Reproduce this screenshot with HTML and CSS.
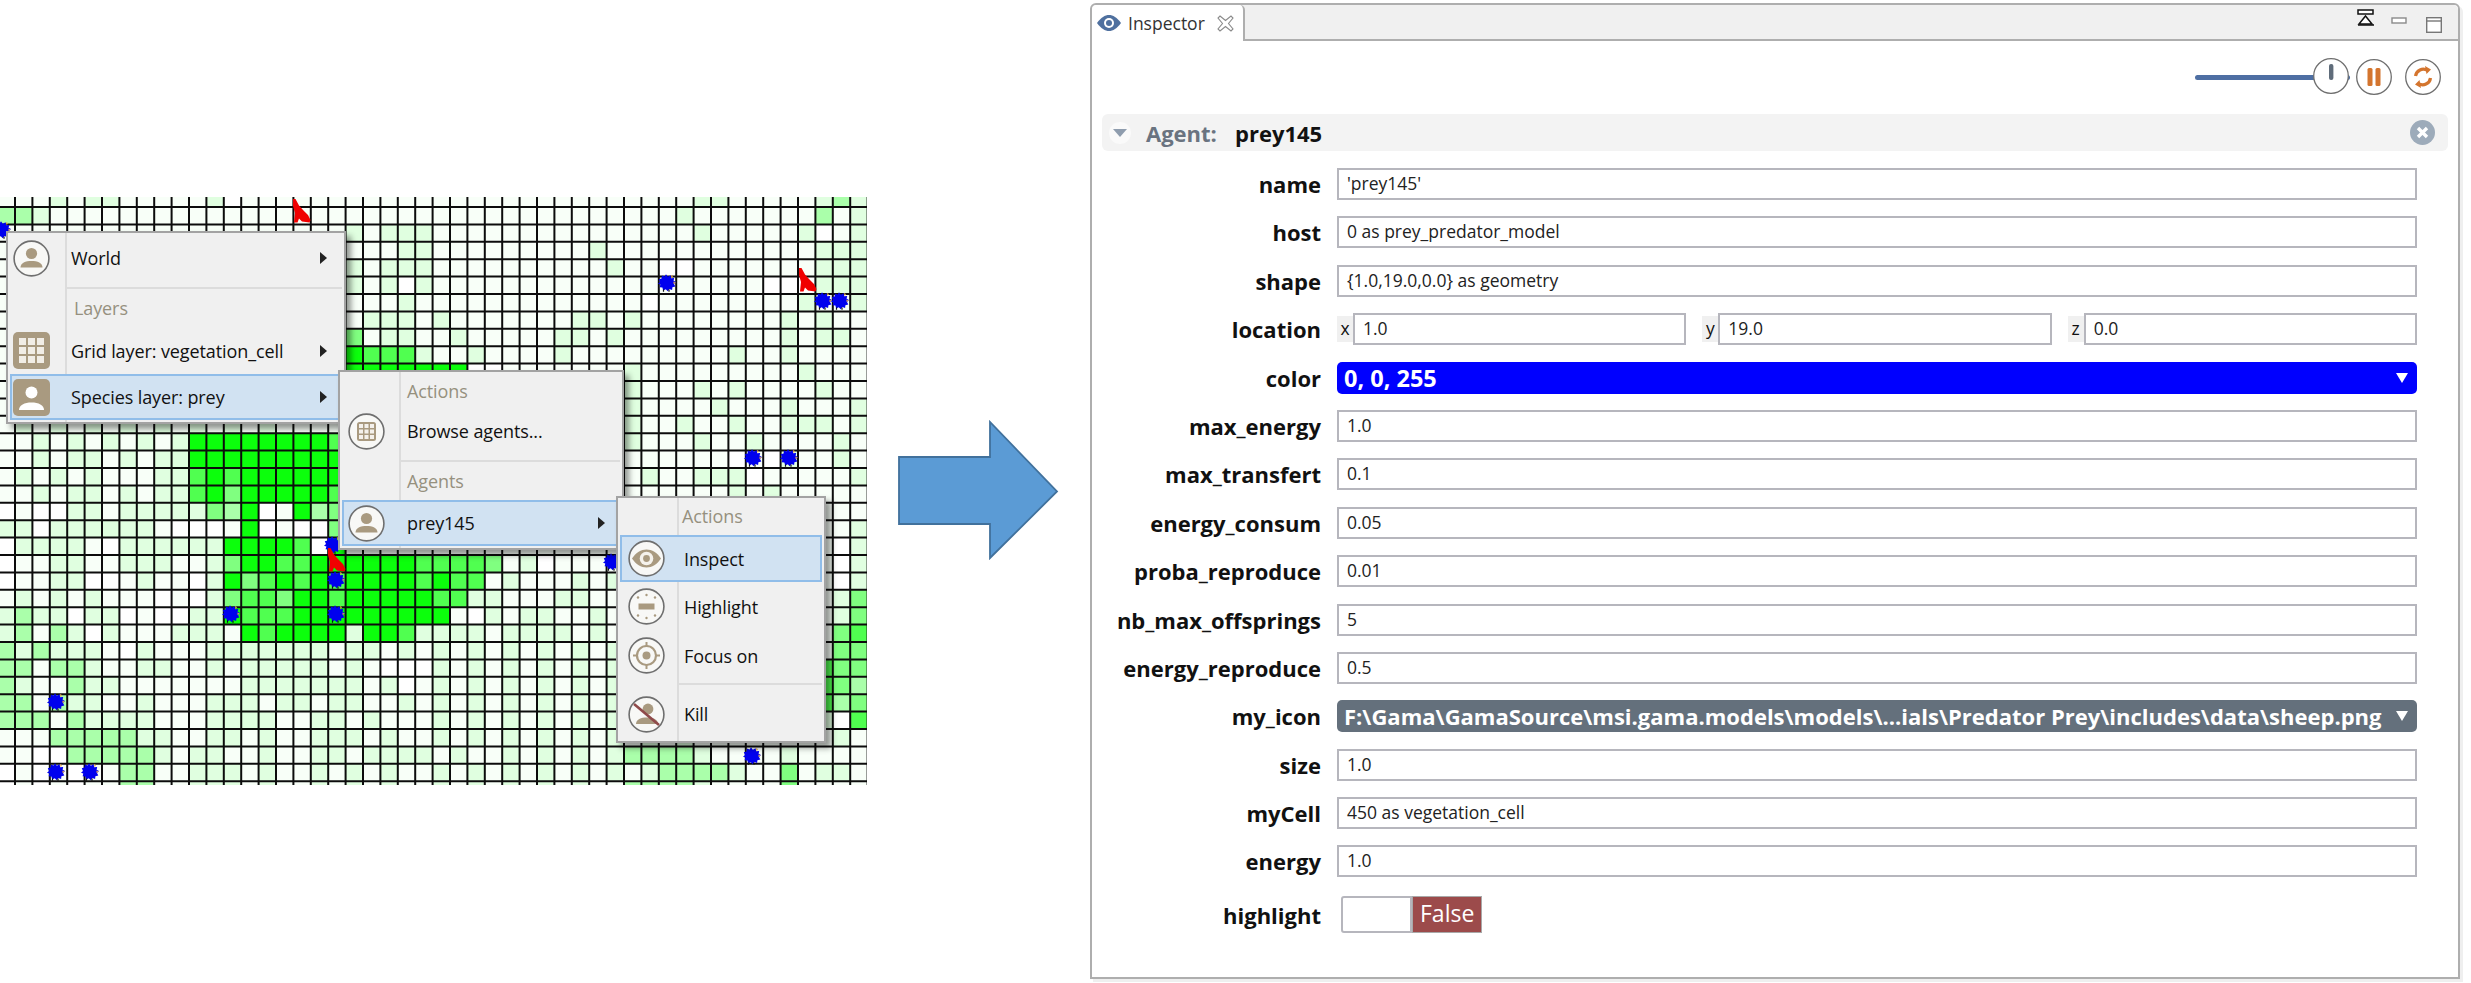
FILE: index.html
```html
<!DOCTYPE html>
<html lang="en">
<head>
<meta charset="utf-8">
<title>Inspector</title>
<link rel="stylesheet" href="styles.css">
</head>
<body>
<svg class="defs" width="0" height="0" aria-hidden="true">
  <symbol id="ring" viewBox="0 0 37 37"><circle cx="18.5" cy="18.5" r="17.4" fill="#f8f8f6" stroke="#6f6f6f" stroke-width="1.6"/></symbol>
  <symbol id="i-person" viewBox="0 0 37 37"><use href="#ring"/><circle cx="18.5" cy="13.5" r="5.6" fill="#a99a80"/><path d="M7.5 27.5c0-4.6 5-6.5 11-6.5s11 1.900 11 6.500z" fill="#a99a80"/></symbol>
  <symbol id="i-grid-round" viewBox="0 0 37 37"><use href="#ring"/><rect x="9" y="9" width="19" height="19" rx="2.500" fill="#a99a80"/><path d="M11 11h4v4h-4zM16.500 11h4v4h-4zM22 11h4v4h-4zM11 16.500h4v4h-4zM16.500 16.500h4v4h-4zM22 16.500h4v4h-4zM11 22h4v4h-4zM16.500 22h4v4h-4zM22 22h4v4h-4z" fill="#f4f1ec"/></symbol>
  <symbol id="i-grid-square" viewBox="0 0 37 37"><rect width="37" height="37" rx="5" fill="#a99a80"/><path d="M6 6h7v7h-7zM15 6h7v7h-7zM24 6h7v7h-7zM6 15h7v7h-7zM15 15h7v7h-7zM24 15h7v7h-7zM6 24h7v7h-7zM15 24h7v7h-7zM24 24h7v7h-7z" fill="#f1ede6"/></symbol>
  <symbol id="i-person-square" viewBox="0 0 37 37"><rect width="37" height="37" rx="5" fill="#a99a80"/><circle cx="18.500" cy="13.500" r="6" fill="#fff"/><path d="M6 31c0-5 5.500-7.500 12.500-7.500s12.500 2.500 12.500 7.500z" fill="#fff"/></symbol>
  <symbol id="i-eye" viewBox="0 0 37 37"><use href="#ring"/><path d="M4 18.500c4-6 9-9 14.500-9s10.500 3 14.500 9c-4 6-9 9-14.500 9s-10.500-3-14.500-9z" fill="#a99a80"/><circle cx="18.500" cy="18.500" r="6.800" fill="#f5f2ec"/><circle cx="18.500" cy="18.500" r="3.400" fill="#a99a80"/></symbol>
  <symbol id="i-highlight" viewBox="0 0 37 37"><use href="#ring"/><rect x="10.500" y="15.500" width="16" height="6" fill="#a99a80"/><g fill="#a99a80"><circle cx="18.500" cy="7" r="1.200"/><circle cx="18.500" cy="30" r="1.200"/><circle cx="10" cy="9.500" r="1.200"/><circle cx="27" cy="9.500" r="1.200"/><circle cx="10" cy="27.500" r="1.200"/><circle cx="27" cy="27.500" r="1.200"/></g></symbol>
  <symbol id="i-focus" viewBox="0 0 37 37"><use href="#ring"/><circle cx="18.500" cy="18.500" r="9.500" fill="none" stroke="#a99a80" stroke-width="2.200"/><circle cx="18.500" cy="18.500" r="4" fill="#a99a80"/><path d="M18.500 5v5M18.500 27v5M5 18.500h5M27 18.500h5" stroke="#a99a80" stroke-width="2"/></symbol>
  <symbol id="i-kill" viewBox="0 0 37 37"><use href="#ring"/><circle cx="20" cy="13" r="5.400" fill="#a99a80"/><path d="M8 28c0-4.600 5-6.500 11-6.500s11 1.900 11 6.500z" fill="#a99a80"/><path d="M6 8l25 21" stroke="#8f4a4a" stroke-width="2.600"/></symbol>
  <symbol id="sheep" viewBox="0 0 18 18"><path d="M8 .2l1.800 2.600 2.800-1.600.6 3 3-.2-.6 2.800 2.400 1.300-2 1.900 1.300 2.500-2.900.8-.3 2.700-2.700-.9-1.700 2.100-1.900-2-2.600 1.200-.8-2.800-2.800-.3.800-2.700L0 9.800l2-1.900L.8 5.200l2.800-.7.300-2.900 2.700.8z" fill="#0000ee"/><path d="M12.800 1l2.200 1-1.200 2.200zM15.500 7.500l2.300 1.300-2.300 1.300z" fill="#e9a94f"/><path d="M5.500 15.500v2.300M11 15.500v2.300" stroke="#111" stroke-width="1.200"/></symbol>
  <symbol id="wolf" viewBox="0 0 18 25"><path d="M0 1L2.500 1L6 7.500L10 12L15 17L17.500 22L16.500 24.500L9 23.500L6 20.500L4.500 24.500L1 24.500L2 15L0 8Z" fill="#f00000"/></symbol>
</svg>

<div class="page">
  <section class="stage">
    <div class="sim">
      <svg id="field" class="field" width="867" height="588" viewBox="0 0 867 588"></svg>

      <nav class="menu menu-a">
        <div class="item"><svg class="ico"><use href="#i-person"/></svg><span class="lbl">World</span><i class="sub"></i></div>
        <hr class="sep">
        <div class="head">Layers</div>
        <div class="item item-grid"><svg class="ico"><use href="#i-grid-square"/></svg><span class="lbl">Grid layer: vegetation_cell</span><i class="sub"></i></div>
        <div class="item on item-species"><svg class="ico"><use href="#i-person-square"/></svg><span class="lbl">Species layer: prey</span><i class="sub"></i></div>
      </nav>

      <nav class="menu menu-b">
        <div class="head">Actions</div>
        <div class="item item-browse"><svg class="ico"><use href="#i-grid-round"/></svg><span class="lbl">Browse agents...</span></div>
        <hr class="sep">
        <div class="head">Agents</div>
        <div class="item on item-species"><svg class="ico"><use href="#i-person"/></svg><span class="lbl">prey145</span><i class="sub"></i></div>
      </nav>

      <nav class="menu menu-c">
        <div class="head">Actions</div>
        <div class="item on"><svg class="ico"><use href="#i-eye"/></svg><span class="lbl">Inspect</span></div>
        <div class="item item-tall"><svg class="ico"><use href="#i-highlight"/></svg><span class="lbl">Highlight</span></div>
        <div class="item item-tall"><svg class="ico"><use href="#i-focus"/></svg><span class="lbl">Focus on</span></div>
        <hr class="sep">
        <div class="item item-kill"><svg class="ico"><use href="#i-kill"/></svg><span class="lbl">Kill</span></div>
      </nav>
    </div>

    <svg class="arrow" width="164" height="142" viewBox="0 0 164 142"><path d="M2 37H93V2L160 71.500L93 138V104H2Z" fill="#5b9bd5" stroke="#41719c" stroke-width="1.800"/></svg>
  </section>

  <section class="panel">
    <header class="tabbar">
      <div class="tab">
        <svg class="tab-eye" width="24" height="16" viewBox="0 0 24 16"><path d="M0 8C4 2.500 8 0 12 0s8 2.500 12 8c-4 5.500-8 8-12 8S4 13.500 0 8z" fill="#4f709f"/><circle cx="12" cy="8" r="5" fill="#fff"/><circle cx="12" cy="8" r="3" fill="#4f709f"/></svg>
        <span class="tab-name">Inspector</span>
        <svg class="tab-x" width="17" height="17" viewBox="0 0 17 17"><path d="M3 1l5.500 4.500L14 1l2 2-4.500 5.500L16 14l-2 2-5.500-4.500L3 16l-2-2 4.500-5.500L1 3z" fill="#fff" stroke="#8a8a8a" stroke-width="1.100"/></svg>
      </div>
      <div class="win-actions">
        <svg width="18" height="17" viewBox="0 0 18 17"><rect x="1" y="1" width="15" height="4" fill="#fff" stroke="#111" stroke-width="1.500"/><path d="M8.500 7L15 15H2Z" fill="#fff" stroke="#111" stroke-width="1.500"/><path d="M1 16h16" stroke="#111" stroke-width="1.500"/></svg>
        <svg width="16" height="7" viewBox="0 0 16 7"><rect x="1" y="1" width="14" height="5" fill="#fff" stroke="#8a8a8a" stroke-width="1.400"/></svg>
        <svg class="win-max" width="16" height="16" viewBox="0 0 16 16"><rect x=".7" y=".7" width="14.600" height="14.600" fill="#fff" stroke="#777" stroke-width="1.400"/><path d="M1 4h14" stroke="#777" stroke-width="1.400"/></svg>
      </div>
    </header>

    <div class="toolbar">
      <div class="slider"><div class="thumb"><svg width="36" height="36" viewBox="0 0 36 36"><circle cx="18" cy="18" r="17.300" fill="#fff" stroke="#6f6f6f" stroke-width="1.300"/><rect x="16" y="6" width="4.400" height="16" rx="2" fill="#5f6c7a"/></svg></div></div>
      <svg class="tool" width="36" height="36" viewBox="0 0 36 36"><circle cx="18" cy="18" r="17.300" fill="#fff" stroke="#6f6f6f" stroke-width="1.300"/><rect x="11.500" y="9" width="5" height="18" rx="1.500" fill="#d4752e"/><rect x="19.500" y="9" width="5" height="18" rx="1.500" fill="#d4752e"/></svg>
      <svg class="tool" width="36" height="36" viewBox="0 0 36 36"><circle cx="18" cy="18" r="17.300" fill="#fff" stroke="#6f6f6f" stroke-width="1.300"/><path d="M10.500 17a7.800 7.800 0 0 1 12-5.500" fill="none" stroke="#d4752e" stroke-width="3.200"/><path d="M25.500 19a7.800 7.800 0 0 1-12 5.500" fill="none" stroke="#d4752e" stroke-width="3.200"/><path d="M20 7l6 3.500-4.500 4.500zM16 29l-6-3.500 4.500-4.500z" fill="#d4752e"/></svg>
    </div>

    <div class="agent">
      <span class="twist"><i></i></span>
      <span class="agent-key">Agent:</span>
      <span class="agent-name">prey145</span>
      <svg class="agent-x" width="25" height="25" viewBox="0 0 25 25"><circle cx="12.500" cy="12.500" r="12.500" fill="#9dabba"/><path d="M8 8l9 9M17 8l-9 9" stroke="#fff" stroke-width="3.400"/></svg>
    </div>

    <div class="rows">
      <div class="row"><label>name</label><div class="field-box">'prey145'</div></div>
      <div class="row"><label>host</label><div class="field-box">0 as prey_predator_model</div></div>
      <div class="row"><label>shape</label><div class="field-box">{1.0,19.0,0.0} as geometry</div></div>
      <div class="row"><label>location</label>
        <div class="coords">
          <div class="coord"><span class="axis">x</span><div class="field-box">1.0</div></div>
          <div class="coord"><span class="axis">y</span><div class="field-box">19.0</div></div>
          <div class="coord"><span class="axis">z</span><div class="field-box">0.0</div></div>
        </div>
      </div>
      <div class="row"><label>color</label><div class="pick pick-blue"><span>0, 0, 255</span><i></i></div></div>
      <div class="row"><label>max_energy</label><div class="field-box">1.0</div></div>
      <div class="row"><label>max_transfert</label><div class="field-box">0.1</div></div>
      <div class="row"><label>energy_consum</label><div class="field-box">0.05</div></div>
      <div class="row"><label>proba_reproduce</label><div class="field-box">0.01</div></div>
      <div class="row"><label>nb_max_offsprings</label><div class="field-box">5</div></div>
      <div class="row"><label>energy_reproduce</label><div class="field-box">0.5</div></div>
      <div class="row"><label>my_icon</label><div class="pick pick-slate"><span>F:\Gama\GamaSource\msi.gama.models\models\...ials\Predator Prey\includes\data\sheep.png</span><i></i></div></div>
      <div class="row"><label>size</label><div class="field-box">1.0</div></div>
      <div class="row"><label>myCell</label><div class="field-box">450 as vegetation_cell</div></div>
      <div class="row"><label>energy</label><div class="field-box">1.0</div></div>
      <div class="row row-bool"><label>highlight</label><div class="bool"><span class="bool-off"></span><span class="bool-val">False</span></div></div>
    </div>
  </section>
</div>
<script src="script.js"></script>
</body>
</html>
```
FILE: styles.css
```css
* { box-sizing: border-box; }
html, body { margin: 0; padding: 0; background: #fff; }
body { font-family: "Open Sans", "Noto Sans", "Liberation Sans", sans-serif; color: #111; overflow: hidden; }
.defs { position: absolute; }
.page { display: flex; width: 2471px; height: 983px; }

/* left: simulation view and arrow */
.stage { width: 1090px; flex: none; display: flex; align-items: flex-start; }
.sim { position: relative; width: 867px; height: 588px; margin-top: 197px; flex: none; }
.field { display: block; }
.arrow { flex: none; margin: 420px 0 0 30px; }

.menu { position: absolute; background: #f0f0f0; border: 2px solid #a3a3a3; box-shadow: 5px 5px 6px rgba(0,0,0,.42); font-size: 18px; letter-spacing: -.1px; background-repeat: no-repeat; }
.menu-a { left: 6px; top: 34px; width: 340px; height: 193px; background-image: linear-gradient(#dcdcdc,#dcdcdc); background-size: 2px 100%; background-position: 57px 0; }
.menu-b { left: 338px; top: 173px; width: 286px; height: 180px; background-image: linear-gradient(#dcdcdc,#dcdcdc); background-size: 2px 100%; background-position: 59px 0; }
.menu-c { left: 616px; top: 299px; width: 210px; height: 247px; background-image: linear-gradient(#dcdcdc,#dcdcdc); background-size: 2px 100%; background-position: 59px 0; }
.item { display: flex; align-items: center; height: 50px; margin: 0 2px; border: 2px solid transparent; padding-right: 13px; }
.item .ico { width: 37px; height: 37px; flex: none; margin-right: 21px; margin-left: 1px; }
.menu-b .ico { margin-left: 4px; margin-right: 22px; }
.menu-c .ico { margin-left: 6px; margin-right: 19px; }
.item.on { background: #d1e2f2; border-color: #90bde9; }
.item-grid { height: 47px; }
.item-species { height: 46px; }
.item-browse { height: 42px; }
.item-tall { height: 49px; }
.item-kill { height: 55px; padding-top: 3px; }
.menu-c .item.on { height: 47px; }
.lbl { flex: 1; white-space: nowrap; }
.sub { width: 0; height: 0; border-left: 7px solid #222; border-top: 6px solid transparent; border-bottom: 6px solid transparent; }
.head { height: 38px; line-height: 38px; color: #96907f; padding-left: 66px; }
.menu-b .head { padding-left: 67px; }
.menu-c .head { padding-left: 64px; height: 37px; line-height: 37px; }
.sep { border: 0; height: 2px; background: #dcdcdc; margin: 4px 2px 0 59px; }
.menu-b .sep { margin: 8px 2px 0 61px; }
.menu-c .sep { margin: 3px 2px 0 61px; }

/* right: inspector */
.panel { width: 1370px; height: 976px; margin-top: 3px; flex: none; border: 2px solid #aeaeae; border-radius: 6px 6px 0 0; box-shadow: 3px 3px 0 #efefef; display: flex; flex-direction: column; }
.tabbar { height: 36px; background: #f0f0f0; border-bottom: 2px solid #aeaeae; display: flex; justify-content: space-between; flex: none; border-radius: 5px 5px 0 0; }
.tab { width: 153px; height: 36px; background: #fff; border-right: 2px solid #aeaeae; display: flex; align-items: center; padding-left: 5px; border-radius: 5px 5px 0 0; }
.tab-name { font-size: 17.5px; margin-left: 7px; color: #333; width: 89px; }
.win-actions { display: flex; align-items: flex-start; gap: 15px; padding: 4px 16px 0 0; }
.win-actions svg:nth-child(2) { margin: 8px 0 0 1px; }
.win-max { margin: 8px 0 0 4px; }
.toolbar { height: 72px; display: flex; justify-content: flex-end; align-items: center; gap: 13px; padding: 0 17px 0 0; flex: none; }
.slider { position: relative; width: 155px; height: 5px; background: #4e6fa3; border-radius: 3px; margin-right: -7px; margin-top: 0; }
.thumb { position: absolute; right: 1px; top: -17px; line-height: 0; }
.tool { flex: none; }
.agent { height: 37px; margin: 1px 10px 0; background: #f3f3f3; border-radius: 6px; display: flex; align-items: center; padding-left: 7px; flex: none; }
.twist { width: 22px; height: 22px; border-radius: 50%; background: #fafafa; display: flex; align-items: center; justify-content: center; }
.twist i { width: 0; height: 0; border-top: 8px solid #8f9dae; border-left: 7px solid transparent; border-right: 7px solid transparent; }
.agent-key { font-weight: 700; font-size: 22px; color: #6a7380; margin-left: 15px; width: 89px; }
.agent-name { font-weight: 700; font-size: 22px; color: #111; flex: 1; }
.agent-x { margin-right: 13px; }

.rows { padding: 17px 41px 0 0; flex: none; }
.row { display: grid; grid-template-columns: 229px 1fr; column-gap: 16px; align-items: center; height: 32px; margin-bottom: 16.4px; }
.row label { text-align: right; font-weight: 700; font-size: 22px; color: #111; white-space: nowrap; }
.field-box { height: 32px; border: 2px solid #b6b6bd; background: #fff; padding-left: 8px; font-size: 17.5px; line-height: 27px; color: #222; white-space: nowrap; }
.coords { display: flex; gap: 16px; }
.coord { flex: 1; display: flex; height: 32px; }
.coord .field-box { flex: 1; padding-left: 8px; }
.axis { width: 16px; flex: none; background: #f0f0f0; margin: 3px 0; line-height: 24px; font-size: 17.5px; text-align: center; }
.pick { height: 32px; border-radius: 5px; color: #fff; font-weight: 700; display: flex; align-items: center; justify-content: space-between; padding: 0 7px; white-space: nowrap; }
.pick i { width: 0; height: 0; border-top: 10px solid #fff; border-left: 6.500px solid transparent; border-right: 6.500px solid transparent; margin-right: 2px; }
.pick-blue { background: #0000ff; font-size: 23.5px; }
.pick-slate { background: #64707c; font-size: 22px; }
.row-bool { margin: 19px 0 0; height: 37px; }
.bool { display: flex; height: 37px; margin-left: 4px; }
.bool-off { width: 71px; background: #fff; border: 2px solid #b6b6bd; border-radius: 3px 0 0 3px; }
.bool-val { width: 70px; background: #9c4b4b; border: 1px solid #a9a9a9; color: #fff; font-size: 23px; line-height: 33px; padding-left: 7px; }
```
FILE: script.js
```js
var map = [
"11121221111120111111111111111111111111112211111232 1",
"33211111111111111111111111111111111111121111111312",
"11111111111111111111212221111111111111112111112012",
"11111111111111111111111221111111112111111111111222",
"11111111111111111111212221111111111211001111111222",
"11111111111111111111212021111111111111111111000222",
"11111111111111111111111211111111111110111111112112",
"11111111111111111111122212111111122121111111121211",
"11111111111111111111412211211111221211111111121221",
"11111111111111111111655521121111211111111121121111",
"11111111111111111111666666600111111121111111112111",
"11111111111111111111666666611111111121112121111211",
"11111111111111111111666666611111111121111211121112",
"12121212121212121111666666611111111221121121122212",
"11212121212666666665666666611111112121112112111121",
"11212212122666666666666666611111111111111101021121",
"12121211122565666666666666611111111212112220111112",
"11212212122564666665666666611111111111111121211111",
"01002212222243601634111111111111111111111111111111",
"22022222210001601004111111111111111111111111111112",
"02222102222226666506111111111111111111111111111102",
"01122112221124665566666655554120111111111111111102",
"01122001211026456565666656551211121211111111111102",
"12121211101024554665666665522111221111111111111124",
"23220220100226555666666666102122112111111111111124",
"23132021112221656666266522221222212121211111111145",
"32322210211122222221221212121212121212111111111144",
"33133211221121222221210002121212121212121111111544",
"32113221111111222222212012121212121212121111111543",
"33132211211122212212211212121212121212111111111534",
"33313222211122221122121112121212121212121111111205",
"11133333221122121122212112121212121212121111111121",
"11003333321221121122122221211212121233332111121 1",
"01010113311222121121212112121212121212333321141221",
"01010113311222121121212112121212121133332111141 1"
];
var shades = ["#ffffff", "#f8fff8", "#e0ffe0", "#aaffaa", "#80ff80", "#50ff50", "#0cff0c"];
var step = 17.4, ox = -2.4, oy = -7.4;
var out = "";
map.forEach(function (row, r) {
  var cells = row.replace(/ /g, "");
  for (var c = 0; c < 50; c++) {
    var v = cells.charAt(c) || "1";
    out += '<rect x="' + (ox + c * step).toFixed(2) + '" y="' + (oy + r * step).toFixed(2) +
      '" width="17.5" height="17.5" fill="' + shades[+v] + '"/>';
  }
});
for (var i = 0; i <= 50; i++) {
  var x = (ox + i * step).toFixed(2);
  out += '<line x1="' + x + '" y1="0" x2="' + x + '" y2="588" class="gl"/>';
}
for (var j = 0; j <= 35; j++) {
  var y = (oy + j * step).toFixed(2);
  out += '<line x1="0" y1="' + y + '" x2="867" y2="' + y + '" class="gl"/>';
}
var sheep = [[667,283],[823,301],[840,301],[753,458],[789,458],[612,562],[231,614],[336,580],[336,614],[56,702],[56,772],[90,772],[752,756],[333,545],[2,230]];
sheep.forEach(function (p) {
  out += '<use href="#sheep" x="' + (p[0] - 9) + '" y="' + (p[1] - 197 - 9) + '" width="18" height="18"/>';
});
var wolves = [[293,198],[799,267],[328,547]];
wolves.forEach(function (p) {
  out += '<use href="#wolf" x="' + p[0] + '" y="' + (p[1] - 197) + '" width="18" height="25"/>';
});
document.getElementById("field").innerHTML =
  '<style>.gl{stroke:#0c0c0c;stroke-width:2}</style>' + out;
```
